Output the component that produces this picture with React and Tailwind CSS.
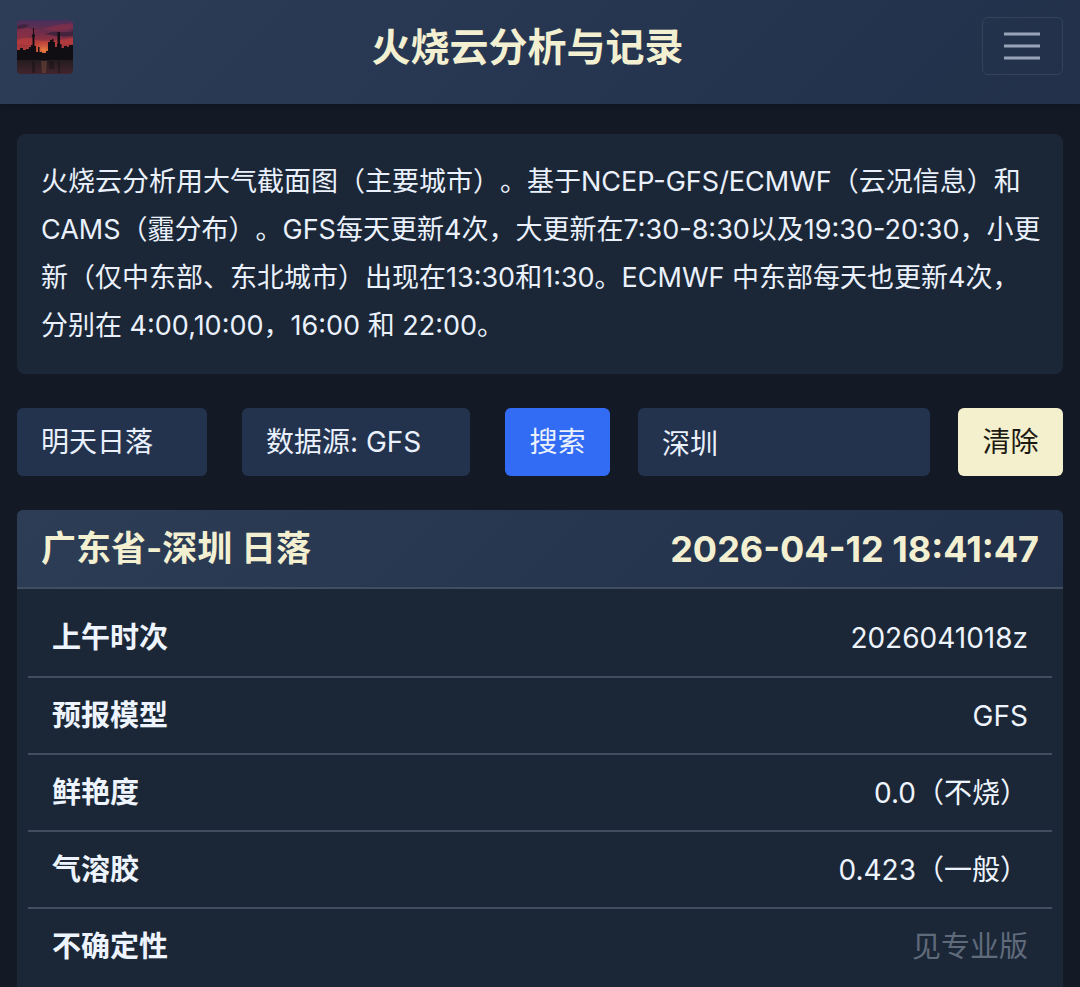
import React, { useState } from 'react'

const rows = [
  { label: '上午时次', value: '2026041018z' },
  { label: '预报模型', value: 'GFS' },
  { label: '鲜艳度', value: '0.0（不烧）' },
  { label: '气溶胶', value: '0.423（一般）' },
  { label: '不确定性', value: '见专业版', muted: true }
]

function Logo() {
  return (
    <svg viewBox="0 0 56 54" className="h-[54px] w-14 rounded" aria-label="火烧云" role="img">
      <defs>
        <linearGradient id="sky" x1="0" y1="0" x2="0" y2="1">
          <stop offset="0" stopColor="#46305c" />
          <stop offset="0.3" stopColor="#6c2d4b" />
          <stop offset="0.6" stopColor="#a0343c" />
          <stop offset="1" stopColor="#bd4a38" />
        </linearGradient>
        <linearGradient id="water" x1="0" y1="0" x2="0" y2="1">
          <stop offset="0" stopColor="#241c1e" />
          <stop offset="1" stopColor="#42242e" />
        </linearGradient>
        <radialGradient id="glow">
          <stop offset="0" stopColor="#ea7f40" />
          <stop offset="1" stopColor="#d2503a" stopOpacity="0" />
        </radialGradient>
      </defs>
      <rect width="56" height="40" fill="url(#sky)" />
      <path d="M0 10 Q8 6 14 9 T30 8 T56 3 V8 Q44 12 34 10 T14 14 T0 15Z" fill="#962f44" opacity="0.5" />
      <path d="M0 6 Q6 3 12 5 L8 8 L1 9Z M28 14 Q36 11 42 12 T56 11 V16 Q44 18 28 14Z" fill="#39213a" opacity="0.8" />
      <path d="M0 20 Q8 16 16 19 T34 21 T56 18 V24 Q30 27 0 24Z" fill="#bf403e" opacity="0.6" />
      <ellipse cx="27" cy="30" rx="16" ry="11" fill="url(#glow)" />
      <path
        d="M0 30 H3 V28 H6 V30 H9 V29 H12 V27 H14 V25 H15.5 V17 L15 15.5 L16 13.5 V8 H17 V13.5 L18 15.5 L17.5 17 V26 H19 V32 H21 V27 H22.5 V32 H25 V33 H29 V31 H31 V22 H33 V20 H35 V19 H36.5 V22 H38 V27 H40 V24 H40.5 V12 H43 V24 H44.5 V28 H47 V26 H50 V27 H52 V25 H56 V42 H0Z"
        fill="#100d13"
      />
      <rect y="40" width="56" height="14" fill="url(#water)" />
      <path d="M24 41 H30 L29 53 H25Z" fill="#8a5842" opacity="0.4" />
      <path d="M15 41 H18 V53 H15Z M32 41 H37 V49 H32Z M41 41 H43 V53 H41Z" fill="#161216" opacity="0.5" />
    </svg>
  )
}

function Navbar() {
  return (
    <header className="flex h-[104px] items-start justify-between bg-linear-135 from-[#2d3d57] to-[#22304a] px-[17px] pt-[17px] shadow-md">
      <a href="#" className="flex h-[60px] items-center">
        <Logo />
      </a>
      <h1 className="text-[39px] leading-[60px] font-semibold text-[#f3f0d2]">火烧云分析与记录</h1>
      <button
        type="button"
        aria-label="菜单"
        className="flex h-[58px] w-[81px] items-center justify-center rounded-md border border-[#34435b]"
      >
        <svg viewBox="0 0 36 28" className="h-7 w-9" stroke="#99a4b8" strokeWidth="3">
          <path d="M0 2 H36 M0 14 H36 M0 26 H36" />
        </svg>
      </button>
    </header>
  )
}

function Filters() {
  const [city, setCity] = useState('深圳')

  return (
    <form
      className="flex gap-[35px] text-[28px] text-[#eaf1fc]"
      onSubmit={(e) => e.preventDefault()}
    >
      <select
        aria-label="时间"
        className="h-[68px] w-[190px] appearance-none rounded-md bg-[#23334e] px-6"
      >
        <option>明天日落</option>
      </select>
      <select
        aria-label="数据源"
        className="h-[68px] w-[228px] appearance-none rounded-md bg-[#23334e] px-6"
      >
        <option>数据源: GFS</option>
      </select>
      <div className="flex min-w-0 flex-1 gap-7">
        <button type="submit" className="h-[68px] w-[105px] shrink-0 rounded-md bg-[#326cf5]">
          搜索
        </button>
        <input
          type="text"
          aria-label="城市"
          value={city}
          onChange={(e) => setCity(e.target.value)}
          className="h-[68px] min-w-0 flex-1 rounded-md bg-[#23334e] px-6"
        />
        <button
          type="button"
          onClick={() => setCity('')}
          className="h-[68px] w-[105px] shrink-0 rounded-md bg-[#f4efcd] text-[#1c1a12]"
        >
          清除
        </button>
      </div>
    </form>
  )
}

function Forecast() {
  return (
    <section className="flex-1 rounded-t-md bg-[#1b2737]">
      <div className="flex h-[79px] items-center justify-between rounded-t-md border-b-2 border-[#414e60] bg-linear-135 from-[#2d3d55] to-[#22304a] px-6 text-[#f3f0d2]">
        <h2 className="text-[35px] font-semibold">广东省-深圳 日落</h2>
        <time className="text-[36px] font-bold">2026-04-12 18:41:47</time>
      </div>
      <div className="px-[11px] pt-[11px]">
        <table className="w-full text-[#eef4fd]">
          <tbody>
            {rows.map((row) => (
              <tr key={row.label} className="h-[77px] border-b-2 border-[#414e60] last:border-b-0">
                <th scope="row" className="px-6 text-left text-[29px] font-semibold">
                  {row.label}
                </th>
                <td
                  className={`px-6 text-right ${
                    row.muted ? 'text-[29px] text-[#5f6a7a]' : 'text-[28px]'
                  }`}
                >
                  {row.value}
                </td>
              </tr>
            ))}
          </tbody>
        </table>
      </div>
    </section>
  )
}

export default function App() {
  return (
    <div
      lang="zh-CN"
      className="flex min-h-screen flex-col bg-[#131a26] font-[Inter,'Noto_Sans_CJK_SC',sans-serif]"
    >
      <Navbar />
      <main className="flex flex-1 flex-col gap-[34px] px-[17px] pt-[30px]">
        <p className="rounded-lg bg-[#1b2737] py-6 pr-5 pl-6 text-[27px] leading-[48px] text-[#eaf1fc] [text-spacing-trim:space-all]">
          火烧云分析用大气截面图（主要城市）。基于NCEP-GFS/ECMWF（云况信息）和CAMS（霾分布）。GFS每天更新4次，大更新在7:30-8:30以及19:30-20:30，小更新（仅中东部、东北城市）出现在13:30和1:30。ECMWF
          中东部每天也更新4次，分别在 4:00,10:00，16:00 和 22:00。
        </p>
        <Filters />
        <Forecast />
      </main>
    </div>
  )
}
